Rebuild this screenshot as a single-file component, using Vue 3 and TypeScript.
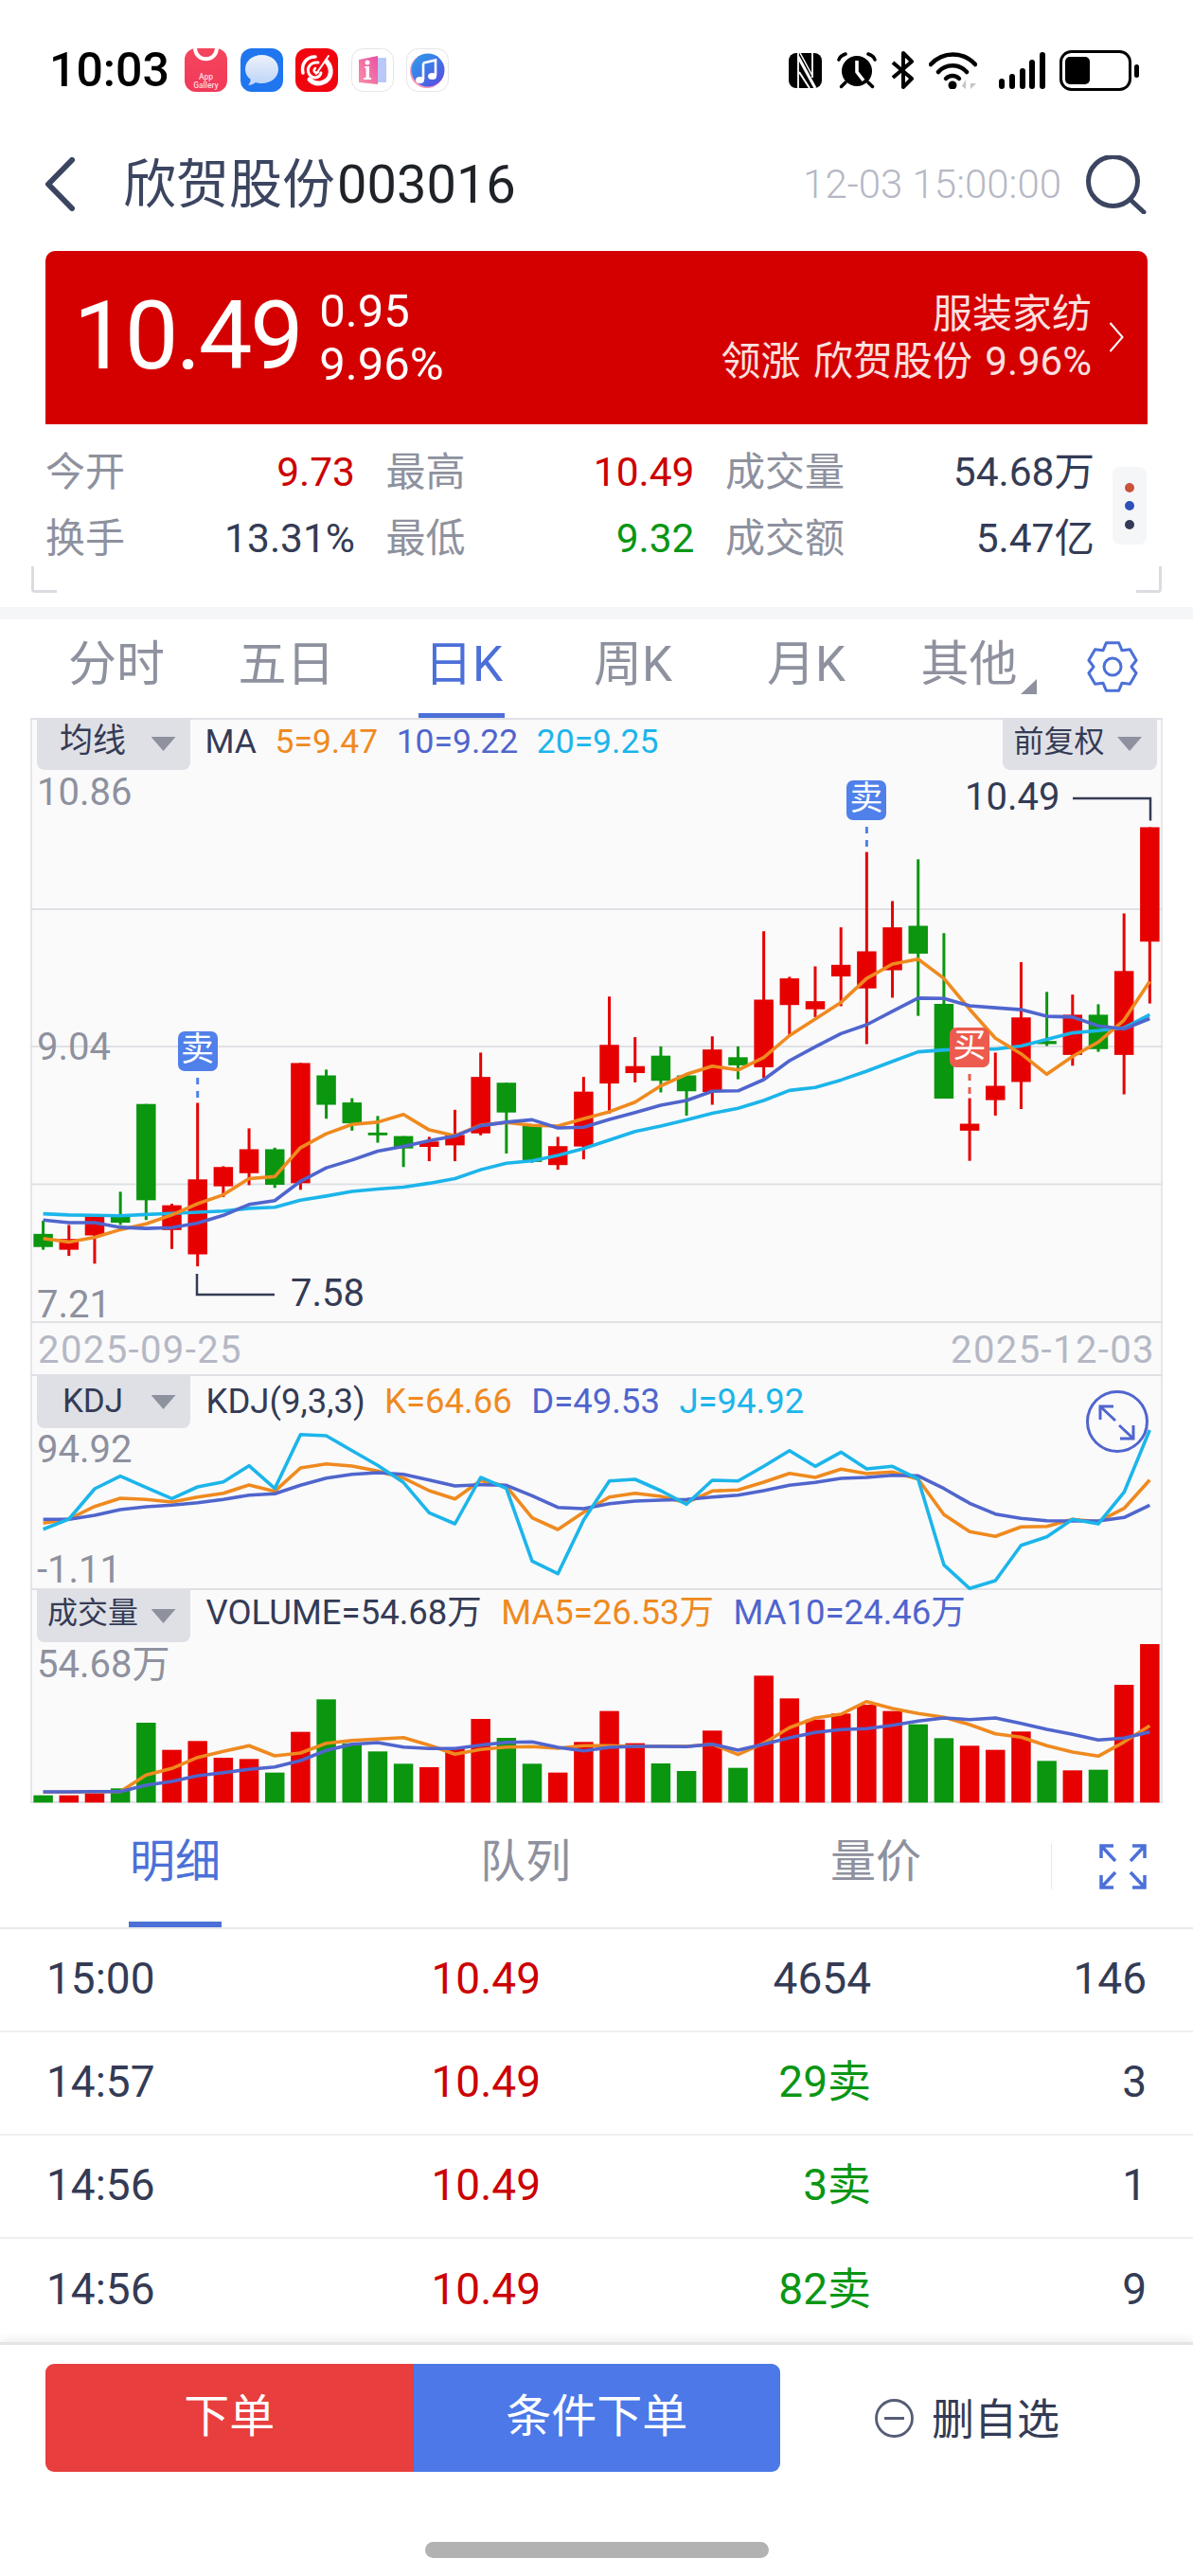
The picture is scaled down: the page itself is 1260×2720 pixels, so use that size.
<script setup lang="ts">
// Daily K-line quote page for a single stock.
type Candle = { c: 'r' | 'g'; hi: number; lo: number; top: number; bot: number }

const STEP = 27.18
const X0 = 13.6
const BODY = 20.5
const xAt = (i: number) => X0 + STEP * i

// Raw series are kept in plot units; each pane maps them to its own pixels.
const priceY = (v: number) => 22 + v / 2.45
const kdjY = (v: number) => v / 3 - 33
const volY = (v: number) => v / 3 - 259

const rawCandles: [string, number, number, number, number][] = [
  ['g', 1247, 1322, 1281, 1315], ['r', 1258, 1338, 1294, 1322], ['r', 1232, 1358, 1232, 1285],
  ['g', 1172, 1258, 1232, 1252], ['g', 945, 1245, 945, 1194], ['r', 1203, 1320, 1207, 1271],
  ['r', 942, 1365, 1140, 1334], ['r', 1106, 1186, 1108, 1158], ['r', 1008, 1155, 1062, 1124],
  ['g', 1058, 1162, 1062, 1154], ['r', 839, 1167, 839, 1150], ['g', 856, 983, 871, 947],
  ['g', 930, 1014, 941, 995], ['g', 976, 1045, 1019, 1026], ['g', 1028, 1108, 1028, 1060],
  ['r', 1030, 1093, 1042, 1056], ['r', 960, 1093, 1025, 1052], ['r', 812, 1026, 875, 1021],
  ['g', 890, 1073, 890, 967], ['g', 1000, 1097, 1000, 1095], ['r', 1030, 1115, 1054, 1103],
  ['r', 875, 1088, 913, 1055], ['r', 667, 970, 792, 892], ['r', 772, 889, 847, 865],
  ['g', 796, 915, 820, 885], ['g', 871, 975, 871, 912], ['r', 770, 947, 804, 914],
  ['g', 796, 881, 824, 845], ['r', 498, 878, 675, 850], ['r', 616, 770, 620, 689],
  ['r', 589, 720, 679, 700], ['r', 488, 692, 585, 615], ['r', 293, 790, 550, 646],
  ['r', 420, 670, 488, 599], ['g', 312, 717, 484, 556], ['g', 503, 931, 686, 931],
  ['r', 930, 1092, 996, 1014], ['r', 812, 975, 898, 935], ['r', 578, 958, 721, 888],
  ['g', 655, 795, 782, 790], ['r', 662, 846, 714, 818], ['g', 687, 810, 714, 803],
  ['r', 452, 920, 601, 818], ['r', 229, 685, 229, 525]
]
const candles: Candle[] = rawCandles.map(([c, hi, lo, top, bot]) => ({
  c: c as 'r' | 'g',
  hi: priceY(hi),
  lo: priceY(lo),
  top: priceY(top),
  bot: priceY(bot)
}))

const ma5 = [1293, 1302, 1290, 1270, 1255, 1232, 1203, 1180, 1138, 1133, 1058, 1022, 998, 992, 972, 1012, 1027, 1000, 993, 1000, 1002, 983, 965, 940, 898, 868, 847, 857, 825, 768, 725, 682, 620, 583, 570, 620, 700, 775, 815, 868, 822, 785, 728, 628]
const ma10 = [1245, 1252, 1252, 1264, 1267, 1265, 1253, 1233, 1205, 1195, 1145, 1110, 1090, 1067, 1055, 1040, 1028, 1001, 992, 986, 1007, 1005, 985, 967, 948, 936, 912, 911, 882, 833, 797, 763, 740, 705, 671, 672, 691, 696, 701, 718, 720, 743, 751, 724]
const ma20 = [1229, 1232, 1233, 1234, 1231, 1228, 1225, 1222, 1215, 1212, 1194, 1183, 1171, 1165, 1160, 1150, 1138, 1115, 1098, 1092, 1078, 1060, 1038, 1016, 1002, 986, 969, 956, 936, 910, 902, 883, 860, 835, 810, 805, 803, 803, 795, 778, 761, 755, 748, 714]

const kLine = [565, 552, 512, 486, 490, 498, 482, 470, 444, 464, 390, 377, 384, 400, 422, 462, 488, 430, 448, 548, 585, 530, 482, 470, 480, 500, 463, 460, 435, 407, 420, 394, 408, 403, 425, 538, 592, 607, 577, 575, 553, 560, 518, 428]
const dLine = [553, 553, 540, 522, 513, 508, 500, 490, 476, 472, 445, 422, 410, 405, 410, 428, 447, 443, 445, 478, 515, 519, 503, 495, 492, 490, 482, 476, 462, 445, 436, 423, 420, 413, 415, 455, 502, 536, 550, 557, 558, 558, 547, 508]
const jLine = [584, 552, 456, 416, 452, 487, 450, 434, 383, 455, 284, 288, 335, 382, 436, 532, 567, 420, 455, 685, 725, 555, 431, 426, 462, 505, 429, 431, 385, 335, 385, 340, 393, 385, 425, 697, 772, 747, 635, 608, 553, 567, 467, 270]

const rawBars: [string, number][] = [
  ['g', 1427], ['r', 1427], ['r', 1421], ['g', 1405], ['g', 1197], ['r', 1283], ['r', 1255], ['r', 1308], ['r', 1312], ['g', 1355], ['r', 1226],
  ['g', 1123], ['g', 1262], ['g', 1288], ['g', 1327], ['r', 1338], ['r', 1278], ['r', 1185], ['g', 1245], ['g', 1327], ['r', 1355], ['r', 1258],
  ['r', 1160], ['r', 1262], ['g', 1326], ['g', 1350], ['r', 1222], ['g', 1340], ['r', 1048], ['r', 1120], ['r', 1187], ['r', 1168], ['r', 1140],
  ['r', 1160], ['g', 1202], ['g', 1246], ['r', 1270], ['r', 1283], ['r', 1225], ['g', 1318], ['r', 1348], ['g', 1346], ['r', 1077], ['r', 948]
]
const bars = rawBars.map(([c, v]) => ({ c, y: volY(v) }))
const volBase = volY(1450)
const volMa5 = [1417, 1417, 1415, 1415, 1363, 1342, 1307, 1288, 1270, 1302, 1293, 1262, 1253, 1249, 1244, 1268, 1297, 1282, 1274, 1273, 1278, 1270, 1270, 1272, 1272, 1272, 1265, 1298, 1262, 1213, 1182, 1170, 1130, 1152, 1168, 1180, 1203, 1232, 1243, 1270, 1290, 1303, 1258, 1207]
const volMa10 = [1416, 1416, 1415, 1415, 1395, 1383, 1365, 1355, 1345, 1337, 1317, 1285, 1265, 1260, 1274, 1279, 1279, 1268, 1259, 1258, 1275, 1286, 1275, 1272, 1272, 1273, 1265, 1284, 1265, 1245, 1228, 1219, 1216, 1205, 1192, 1182, 1187, 1182, 1199, 1218, 1234, 1252, 1246, 1226]

const toPoints = (vals: number[], map: (v: number) => number) =>
  vals.map((v, i) => `${xAt(i).toFixed(1)},${map(v).toFixed(1)}`).join(' ')

const priceLines = [
  { cls: 'ln-cyan', pts: toPoints(ma20, priceY) },
  { cls: 'ln-orange', pts: toPoints(ma5, priceY) },
  { cls: 'ln-blue', pts: toPoints(ma10, priceY) }
]
const kdjLines = [
  { cls: 'ln-orange', pts: toPoints(kLine, kdjY) },
  { cls: 'ln-blue', pts: toPoints(dLine, kdjY) },
  { cls: 'ln-cyan', pts: toPoints(jLine, kdjY) }
]
const volLines = [
  { cls: 'ln-orange', pts: toPoints(volMa5, volY) },
  { cls: 'ln-blue', pts: toPoints(volMa10, volY) }
]

// Settings gear: six teeth around a ring, built in polar form.
const gearPath = (() => {
  const pts: string[] = []
  for (let t = 0; t < 6; t++) {
    const a = -Math.PI / 2 + (t * Math.PI) / 3
    const offs: [number, number][] = [[-0.52, 20], [-0.26, 26], [0.26, 26], [0.52, 20]]
    for (const [d, r] of offs) {
      pts.push(`${(27 + r * Math.cos(a + d)).toFixed(2)} ${(27 + r * Math.sin(a + d)).toFixed(2)}`)
    }
  }
  return 'M' + pts.join('L') + 'Z'
})()

const periods = ['分时', '五日', '日K', '周K', '月K', '其他']
const stats = [
  { label: '今开', value: '9.73', tone: 'up' },
  { label: '最高', value: '10.49', tone: 'up' },
  { label: '成交量', value: '54.68万', tone: '' },
  { label: '换手', value: '13.31%', tone: '' },
  { label: '最低', value: '9.32', tone: 'down' },
  { label: '成交额', value: '5.47亿', tone: '' }
]
const trades = [
  { time: '15:00', price: '10.49', vol: '4654', tone: '', count: '146' },
  { time: '14:57', price: '10.49', vol: '29卖', tone: 'down', count: '3' },
  { time: '14:56', price: '10.49', vol: '3卖', tone: 'down', count: '1' },
  { time: '14:56', price: '10.49', vol: '82卖', tone: 'down', count: '9' }
]
</script>

<template>
  <div class="page">
    <header class="status">
      <span class="clock">10:03</span>
      <div class="apps">
        <svg class="app" viewBox="0 0 45 46">
          <defs>
            <linearGradient id="galleryFill" x1="0" y1="0" x2="0" y2="1">
              <stop offset="0" stop-color="#f4465c" />
              <stop offset="1" stop-color="#f2385a" />
            </linearGradient>
          </defs>
          <rect width="45" height="46" rx="12" fill="url(#galleryFill)" />
          <path d="M11 0C12 15 33 15 34 0" fill="none" stroke="#fff" stroke-width="4" />
          <text x="22.5" y="33" class="gallery-text">App</text>
          <text x="22.5" y="42" class="gallery-text">Gallery</text>
        </svg>
        <svg class="app" viewBox="0 0 45 46">
          <defs>
            <linearGradient id="bubbleFill" x1="0" y1="0" x2="0" y2="1">
              <stop offset="0" stop-color="#eef2fb" />
              <stop offset="1" stop-color="#bcd3f8" />
            </linearGradient>
          </defs>
          <rect width="45" height="46" rx="12" fill="#1f76ef" />
          <path d="M22.5 7C32.5 7 40 13.500 40 22S32.500 37 22.500 37C20 37 18 36.600 16 36C13.500 38.500 10 39 8 38.800C10 37 10.800 34.700 10.500 32.800C6.800 30 5 26.500 5 22C5 13.500 12.500 7 22.500 7Z" fill="url(#bubbleFill)" />
        </svg>
        <svg class="app" viewBox="0 0 45 46">
          <rect width="45" height="46" rx="12" fill="#f2040f" />
          <g fill="none" stroke="#fff" stroke-linecap="round">
            <path d="M21 9C11 9 6 17 8 26" stroke-width="3.500" />
            <path d="M24 15C15 14 11 22 15 28C19 33 26 31 27 26" stroke-width="3" />
            <path d="M21 21C18 24 21 27 24 25" stroke-width="2.500" />
            <path d="M33 14C40 22 38 33 29 36C24 38 19 37 15 33" stroke-width="5" />
            <path d="M35 8L22 27" stroke-width="2" />
          </g>
        </svg>
        <svg class="app" viewBox="0 0 45 46">
          <defs>
            <linearGradient id="bookFill" x1="0" y1="1" x2="1" y2="0">
              <stop offset="0" stop-color="#fb8fa6" />
              <stop offset="1" stop-color="#e851a5" />
            </linearGradient>
          </defs>
          <rect x=".5" y=".5" width="44" height="45" rx="12" fill="#fff" stroke="#e5e5ea" />
          <path d="M25 10H37V36H25Z" fill="#b9c8f8" />
          <path d="M8 12L28 8V38L8 36Z" fill="url(#bookFill)" />
          <path d="M14 19H19V31H21V33H13V31H15.500V21H14Z" fill="#fff" />
          <circle cx="17" cy="15" r="2.500" fill="#fff" />
        </svg>
        <svg class="app" viewBox="0 0 45 46">
          <defs>
            <linearGradient id="discFill" x1="0" y1="0" x2="1" y2="1">
              <stop offset="0" stop-color="#2aa2ec" />
              <stop offset="1" stop-color="#5a48e0" />
            </linearGradient>
          </defs>
          <rect x=".5" y=".5" width="44" height="45" rx="12" fill="#fff" stroke="#e5e5ea" />
          <circle cx="22" cy="24" r="18" fill="#f2679b" opacity=".7" />
          <circle cx="23" cy="23" r="17.500" fill="url(#discFill)" />
          <path d="M18 15.500L31 12.500V29" fill="none" stroke="#fff" stroke-width="2.600" />
          <path d="M18 15.500V33" fill="none" stroke="#fff" stroke-width="2.600" />
          <ellipse cx="14.500" cy="33.500" rx="4.500" ry="3.500" fill="#fff" />
          <ellipse cx="27.500" cy="29.500" rx="4.500" ry="3.500" fill="#fff" />
        </svg>
      </div>
      <div class="sys">
        <svg class="nfc" viewBox="0 0 35 37">
          <rect width="35" height="37" rx="8" fill="#000" />
          <g fill="none" stroke="#fff">
            <path d="M10 0V37" stroke-width="1.800" />
            <path d="M10 4L28 37" stroke-width="3" />
            <path d="M11 20L22 37" stroke-width="2" />
            <path d="M25 0V26" stroke-width="1.800" />
            <path d="M12 0L25 24" stroke-width="1.500" />
          </g>
        </svg>
        <svg class="alarm" viewBox="0 0 42 39">
          <circle cx="21" cy="20" r="16" fill="#000" />
          <path d="M21 9V21L28 30" fill="none" stroke="#fff" stroke-width="3.600" />
          <g fill="none" stroke="#000" stroke-width="3.500" stroke-linecap="round">
            <path d="M2 8C3 5 6 3 9 2" />
            <path d="M40 8C39 5 36 3 33 2" />
            <path d="M4.500 36.500L9 32" />
            <path d="M37.500 36.500L33 32" />
          </g>
        </svg>
        <svg class="bt" viewBox="0 0 28 40">
          <path d="M3 12L23 29L14 38V2L23 11L3 28" fill="none" stroke="#000" stroke-width="4" stroke-linejoin="round" />
        </svg>
        <svg class="wifi" viewBox="0 0 51 40">
          <g fill="none" stroke="#000" stroke-width="4.500" stroke-linecap="round">
            <path d="M2 14C15 0 36 0 49 14" />
            <path d="M10 22C18 13 32 13 40 22" />
            <path d="M18 29C22 25 28 25 32 29" />
          </g>
          <circle cx="25" cy="36" r="4.500" fill="#000" />
          <path d="M39 30V40L35 37ZM44 30V40L50 34H44Z" fill="#c4c4c4" />
        </svg>
        <svg class="signal" viewBox="0 0 49 39">
          <rect x="0" y="28" width="6" height="11" rx="3" />
          <rect x="11" y="23" width="6" height="16" rx="3" />
          <rect x="22" y="17" width="6" height="22" rx="3" />
          <rect x="32" y="8" width="6" height="31" rx="3" />
          <rect x="43" y="0" width="6" height="39" rx="3" />
        </svg>
        <svg class="battery" viewBox="0 0 84 43">
          <rect x="1.500" y="1.500" width="73" height="40" rx="11" fill="none" stroke="#000" stroke-width="3" />
          <rect x="6" y="7" width="26" height="29" rx="5" fill="#000" />
          <rect x="79" y="15" width="5" height="14" rx="2.500" fill="#000" />
        </svg>
      </div>
    </header>

    <nav class="title-bar">
      <svg class="back" viewBox="0 0 33 57">
        <path d="M29 3L4 28.500L29 54" fill="none" stroke="#3c4560" stroke-width="6" stroke-linecap="round" stroke-linejoin="round" />
      </svg>
      <h1 class="name">欣贺股份<span class="code">003016</span></h1>
      <span class="stamp">12-03 15:00:00</span>
      <svg class="search" viewBox="0 0 64 62">
        <circle cx="28.500" cy="27.500" r="26" fill="none" stroke="#3c4560" stroke-width="5" />
        <path d="M47 47L61 60" stroke="#3c4560" stroke-width="5" stroke-linecap="round" />
      </svg>
    </nav>

    <section class="quote">
      <span class="last">10.49</span>
      <div class="change">
        <span>0.95</span>
        <span>9.96%</span>
      </div>
      <div class="sector">
        <span>服装家纺</span>
        <span class="sector-lead">领涨 欣贺股份 9.96%</span>
      </div>
      <svg class="chev" viewBox="0 0 16 32">
        <path d="M1.500 1L14.500 16L1.500 31" fill="none" stroke="#fff" stroke-width="2" />
      </svg>
    </section>

    <section class="stats">
      <div v-for="s in stats" :key="s.label" class="stat">
        <span class="stat-label">{{ s.label }}</span>
        <span class="stat-value" :class="s.tone">{{ s.value }}</span>
      </div>
      <div class="chip">
        <i class="dot dot-r"></i>
        <i class="dot dot-b"></i>
        <i class="dot dot-k"></i>
      </div>
      <i class="bracket bracket-l"></i>
      <i class="bracket bracket-r"></i>
    </section>

    <div class="band"></div>

    <div class="periods">
      <span v-for="(p, i) in periods" :key="p" class="period" :class="{ on: i === 2, more: i === 5 }">{{ p }}</span>
      <svg class="gear" viewBox="0 0 54 54">
        <path :d="gearPath" fill="none" stroke="#4c70d8" stroke-width="3" stroke-linejoin="round" />
        <circle cx="27" cy="27" r="9" fill="none" stroke="#4c70d8" stroke-width="3" />
      </svg>
    </div>

    <section class="chart">
      <div class="pane pane-price">
        <div class="legend">
          <div class="pill"><span class="pill-text">均线</span><i class="caret"></i></div>
          <span class="ink">MA</span>
          <span class="c-orange">5=9.47</span>
          <span class="c-blue">10=9.22</span>
          <span class="c-cyan">20=9.25</span>
          <div class="pill pill-end"><span class="pill-text small">前复权</span><i class="caret"></i></div>
        </div>
        <svg class="plot" width="1196" height="692">
          <line v-for="y in [202, 347, 492.5, 638]" :key="y" x1="0" x2="1196" :y1="y" :y2="y" class="grid" />
          <g v-for="(k, i) in candles" :key="i" :class="k.c === 'r' ? 'rise' : 'fall'">
            <rect :x="xAt(i) - 1.5" :y="k.hi" width="3" :height="k.lo - k.hi" />
            <rect :x="xAt(i) - BODY / 2" :y="k.top" :width="BODY" :height="k.bot - k.top || 1" />
          </g>
          <polyline v-for="l in priceLines" :key="l.cls" :points="l.pts" class="ln" :class="l.cls" />
          <path d="M176 587V609H258" class="lead" />
          <path d="M1101 85H1183V108.500" class="lead" />
          <path d="M176.700 380V406" class="dash dash-b" />
          <path d="M883.400 115V141" class="dash dash-b" />
          <path d="M992 376V402" class="dash dash-r" />
        </svg>
        <span class="axis ax-hi">10.86</span>
        <span class="axis ax-mid">9.04</span>
        <span class="axis ax-lo">7.21</span>
        <span class="note note-hi">10.49</span>
        <span class="note note-lo">7.58</span>
        <span class="sig sig-a">卖</span>
        <span class="sig sig-b">卖</span>
        <span class="sig sig-c">买</span>
        <div class="dates"><span>2025-09-25</span><span>2025-12-03</span></div>
      </div>

      <div class="pane pane-kdj">
        <div class="legend">
          <div class="pill"><span class="pill-text">KDJ</span><i class="caret"></i></div>
          <span class="ink">KDJ(9,3,3)</span>
          <span class="c-orange">K=64.66</span>
          <span class="c-blue">D=49.53</span>
          <span class="c-cyan">J=94.92</span>
        </div>
        <svg class="plot" width="1196" height="226">
          <polyline v-for="l in kdjLines" :key="l.cls" :points="l.pts" class="ln" :class="l.cls" />
          <circle cx="1148" cy="48" r="31.500" class="ring" />
          <path d="M1130 46V32H1144M1130 32L1146 47M1165 52V66H1151M1165 66L1150 52" class="ring" />
        </svg>
        <span class="axis ax-kdj-hi">94.92</span>
        <span class="axis ax-kdj-lo">-1.11</span>
      </div>

      <div class="pane pane-vol">
        <div class="legend">
          <div class="pill"><span class="pill-text small">成交量</span><i class="caret"></i></div>
          <span class="ink">VOLUME=54.68万</span>
          <span class="c-orange">MA5=26.53万</span>
          <span class="c-blue">MA10=24.46万</span>
        </div>
        <svg class="plot" width="1196" height="225">
          <rect
            v-for="(b, i) in bars"
            :key="i"
            :x="xAt(i) - BODY / 2"
            :y="b.y"
            :width="BODY"
            :height="volBase - b.y"
            :class="b.c === 'r' ? 'rise' : 'fall'"
          />
          <polyline v-for="l in volLines" :key="l.cls" :points="l.pts" class="ln" :class="l.cls" />
        </svg>
        <span class="axis ax-vol">54.68万</span>
      </div>
    </section>

    <div class="deal-tabs">
      <span class="deal-tab on">明细</span>
      <span class="deal-tab">队列</span>
      <span class="deal-tab">量价</span>
      <div class="expand">
        <svg viewBox="0 0 50 48" width="50" height="48">
          <path d="M2 15V2H15M2 2L17 18M48 15V2H35M48 2L33 18M2 33V46H15M2 46L17 30M48 33V46H35M48 46L33 30" fill="none" stroke="#4c70d8" stroke-width="3.500" />
        </svg>
      </div>
    </div>

    <div class="deals">
      <div v-for="(t, i) in trades" :key="i" class="deal">
        <span>{{ t.time }}</span>
        <span class="num up">{{ t.price }}</span>
        <span class="num" :class="t.tone">{{ t.vol }}</span>
        <span class="num">{{ t.count }}</span>
      </div>
    </div>

    <footer class="dock">
      <div class="actions">
        <div class="btns">
          <span class="btn btn-order">下单</span>
          <span class="btn btn-cond">条件下单</span>
        </div>
        <div class="unwatch">
          <svg viewBox="0 0 41 41" width="41" height="41">
            <circle cx="20.500" cy="20.500" r="19" fill="none" stroke="#565d75" stroke-width="2.800" />
            <path d="M10 20.500H31" stroke="#565d75" stroke-width="3" />
          </svg>
          <span class="unwatch-text">删自选</span>
        </div>
      </div>
      <i class="home"></i>
    </footer>
  </div>
</template>

<style>
body {
  margin: 0;
  background: #fff;
}
</style>

<style scoped>
.page {
  width: 1260px;
  height: 2720px;
  overflow: hidden;
  background: #fff;
  color: #343b55;
  font-family: Roboto, "Noto Sans CJK SC", sans-serif;
}

/* status bar */
.status {
  display: flex;
  align-items: center;
  box-sizing: border-box;
  height: 120px;
  padding: 51px 57px 23px 52px;
}
.clock {
  width: 127px;
  font-size: 50px;
  font-weight: 500;
  line-height: 46px;
  color: #000;
}
.apps {
  display: flex;
  gap: 13.500px;
  margin-left: 16px;
}
.app {
  width: 45px;
  height: 46px;
}
.gallery-text {
  font-size: 8.500px;
  font-weight: 500;
  text-anchor: middle;
  fill: #ffd9df;
}
.sys {
  display: flex;
  align-items: center;
  margin-left: auto;
}
.nfc { width: 35px; height: 37px; }
.alarm { width: 42px; height: 39px; margin-left: 16px; }
.bt { width: 28px; height: 40px; margin-left: 14px; }
.wifi { width: 51px; height: 40px; margin-left: 13px; }
.signal { width: 49px; height: 39px; margin-left: 23px; }
.battery { width: 84px; height: 43px; margin-left: 15px; }

/* title row */
.title-bar {
  display: flex;
  align-items: center;
  box-sizing: border-box;
  height: 145px;
  padding: 4px 49px 0 47px;
}
.back {
  width: 33px;
  height: 57px;
}
.name {
  margin: 0 0 0 50px;
  font-size: 56px;
  font-weight: 400;
  line-height: 70px;
  color: #3c4560;
}
.code {
  margin-left: 2px;
  font-size: 56px;
  color: #1f2226;
}
.stamp {
  margin-left: auto;
  font-size: 42px;
  font-weight: 300;
  color: #b5b8c4;
}
.search {
  width: 64px;
  height: 62px;
  margin-left: 26px;
}

/* price banner */
.quote {
  display: flex;
  align-items: flex-start;
  box-sizing: border-box;
  height: 183px;
  margin: 0 48px;
  padding-left: 29.500px;
  background: #d40000;
  border-radius: 10px 10px 0 0;
  color: #fff;
}
.last {
  margin-top: 30px;
  font-size: 101px;
  line-height: 120px;
  letter-spacing: -2.600px;
}
.change {
  display: flex;
  flex-direction: column;
  margin: 36px 0 0 19px;
  font-size: 49px;
  line-height: 56px;
}
.sector {
  display: flex;
  flex-direction: column;
  align-items: flex-end;
  margin: 42px 0 0 auto;
  font-size: 42px;
  line-height: 50px;
  color: #fbe0e0;
}
.sector-lead {
  word-spacing: 3px;
}
.chev {
  width: 16px;
  height: 32px;
  margin: 75px 25px 0 18px;
}

/* day statistics */
.stats {
  position: relative;
  display: grid;
  grid-template-columns: 327px 326px 390px;
  grid-auto-rows: 70px;
  column-gap: 32.500px;
  box-sizing: border-box;
  height: 193px;
  padding: 16px 0 0 48px;
}
.stat {
  display: flex;
  align-items: center;
  justify-content: space-between;
  font-size: 42px;
  line-height: 56px;
}
.stat-label {
  color: #8e919e;
}
.stat-value {
  font-size: 42.500px;
  color: #343b55;
}
.up { color: #cc0000; }
.down { color: #0a9614; }
.chip {
  position: absolute;
  left: 1175px;
  top: 45px;
  display: flex;
  flex-direction: column;
  align-items: center;
  justify-content: center;
  gap: 9.500px;
  width: 36px;
  height: 82px;
  background: #f5f6f8;
  border-radius: 8px;
}
.dot {
  width: 10px;
  height: 10px;
  border-radius: 50%;
}
.dot-r { background: #c9533c; }
.dot-b { background: #3050b8; }
.dot-k { background: #343b55; }
.bracket {
  position: absolute;
  top: 150px;
  width: 27px;
  height: 28px;
  box-sizing: border-box;
  border-bottom: 3px solid #dadce2;
}
.bracket-l {
  left: 33px;
  border-left: 3px solid #dadce2;
  border-bottom-left-radius: 4px;
}
.bracket-r {
  left: 1200px;
  border-right: 3px solid #dadce2;
  border-bottom-right-radius: 4px;
}
.band {
  height: 13px;
  background: #f5f6f8;
}

/* period switcher */
.periods {
  display: grid;
  grid-template-columns: 180px 179px 195px 163px 203px 141px 1fr;
  align-items: center;
  box-sizing: border-box;
  height: 104px;
  padding-left: 33px;
}
.period {
  position: relative;
  height: 104px;
  line-height: 96px;
  font-size: 51px;
  text-align: center;
  color: #8e919e;
}
.period.on {
  color: #4c70d8;
}
.period.on::after {
  content: "";
  position: absolute;
  left: 50px;
  top: 98.500px;
  width: 91px;
  height: 5.500px;
  background: #4c70d8;
}
.period.more::after {
  content: "";
  position: absolute;
  right: -1px;
  top: 63px;
  width: 17px;
  height: 16px;
  background: #8e919e;
  clip-path: polygon(100% 0, 100% 100%, 0 100%);
}
.gear {
  width: 54px;
  height: 54px;
  margin: -4px 0 0 54px;
}

/* chart panes */
.chart {
  width: 1196px;
  margin-left: 32px;
  background: #fafafb;
  box-shadow: inset 0 2px 0 #e0e1e5, inset 2px 0 0 #e6e7eb, inset -2px 0 0 #e6e7eb;
}
.pane {
  position: relative;
  box-sizing: border-box;
  border-bottom: 2px solid #e0e1e5;
}
.pane-price { height: 695px; }
.pane-kdj { height: 226px; }
.pane-vol { height: 225px; }
.plot {
  position: absolute;
  left: 0;
  top: 0;
  display: block;
}
.legend {
  position: relative;
  z-index: 1;
  display: flex;
  align-items: flex-start;
  gap: 20.500px;
  height: 55px;
  padding: 0 6.500px;
  font-size: 36.500px;
  line-height: 50px;
  white-space: nowrap;
}
.pane-price .legend {
  gap: 19.500px;
  font-size: 35.500px;
}
.pane-kdj .legend { line-height: 54px; }
.pane-vol .legend { line-height: 48px; }
.ink { color: #343b55; }
.c-orange { color: #ef8a1f; }
.c-blue { color: #5065cd; }
.c-cyan { color: #1cb5ea; }
.pill {
  display: flex;
  align-items: flex-start;
  width: 162.500px;
  height: 55px;
  margin-right: -4px;
  background: #dfe0e5;
  border-radius: 0 0 8px 8px;
}
.pill-end {
  margin-left: auto;
  margin-right: 0;
}
.pill-text {
  width: 119px;
  text-align: center;
  font-size: 35px;
  color: #343b55;
}
.pill-text.small {
  font-size: 32px;
}
.caret {
  align-self: center;
  width: 26px;
  height: 15px;
  margin-left: 2px;
  background: #8e919e;
  clip-path: polygon(0 0, 100% 0, 50% 100%);
}
.grid {
  stroke: #e0e1e5;
  stroke-width: 2;
}
.rise { fill: #e60000; }
.fall { fill: #0a960f; }
.ln {
  fill: none;
  stroke-width: 3.600;
  stroke-linejoin: round;
}
.ln-orange { stroke: #ef8a1f; }
.ln-blue { stroke: #5065cd; }
.ln-cyan { stroke: #1cb5ea; }
.lead {
  fill: none;
  stroke: #343b55;
  stroke-width: 2.500;
}
.dash {
  fill: none;
  stroke-width: 3;
  stroke-dasharray: 7 7;
}
.dash-b { stroke: #5080ea; }
.dash-r { stroke: #ec5b4e; }
.ring {
  fill: none;
  stroke: #5065cd;
  stroke-width: 3;
}
.axis {
  position: absolute;
  left: 7px;
  font-size: 40px;
  line-height: 40px;
  color: #8e919e;
}
.ax-hi { top: 59px; }
.ax-mid { top: 328px; }
.ax-lo { top: 600px; }
.ax-kdj-hi { top: 58px; }
.ax-kdj-lo { top: 185px; }
.ax-vol { top: 59px; }
.note {
  position: absolute;
  font-size: 40px;
  line-height: 40px;
  color: #343b55;
}
.note-hi { left: 987px; top: 64px; }
.note-lo { left: 275px; top: 588px; }
.sig {
  position: absolute;
  width: 42px;
  height: 42px;
  border-radius: 7px;
  font-size: 35px;
  line-height: 40px;
  text-align: center;
  color: #fff;
  background: #5080ea;
}
.sig-a { left: 155.500px; top: 331px; }
.sig-b { left: 862px; top: 66px; }
.sig-c { left: 971px; top: 326.500px; background: #ec5b4e; }
.dates {
  position: absolute;
  left: 8px;
  right: 8px;
  top: 648px;
  display: flex;
  justify-content: space-between;
  font-size: 40px;
  line-height: 40px;
  letter-spacing: 1.400px;
  color: #b5b8c4;
}

/* trade detail tabs */
.deal-tabs {
  display: grid;
  grid-template-columns: 370px 370px 370px 1fr;
  align-items: stretch;
  box-sizing: border-box;
  height: 133px;
  border-bottom: 2px solid #e8e9ec;
}
.deal-tab {
  position: relative;
  line-height: 124px;
  font-size: 48px;
  text-align: center;
  color: #8e919e;
}
.deal-tab.on { color: #4c70d8; }
.deal-tab.on::after {
  content: "";
  position: absolute;
  left: 136px;
  bottom: 0;
  width: 98px;
  height: 6px;
  background: #4c70d8;
}
.expand {
  display: flex;
  justify-content: flex-end;
  box-sizing: border-box;
  height: 48px;
  margin-top: 43px;
  padding-right: 49px;
  border-left: 1px solid #e6e7ea;
}
.deals {
  height: 436px;
}
.deal {
  display: grid;
  grid-template-columns: 200px 322px 349px 291px;
  align-items: center;
  box-sizing: border-box;
  height: 109px;
  padding: 0 0 3px 49px;
  border-bottom: 2px solid #eeeff1;
  font-size: 46px;
  line-height: 60px;
}
.deal:last-child {
  border-bottom: 0;
}
.num {
  text-align: right;
}

/* bottom dock */
.dock {
  position: relative;
  box-sizing: border-box;
  height: 247px;
  padding-top: 20px;
  background: #fff;
  border-top: 3px solid #e3e4e6;
  box-shadow: 0 -5px 8px rgba(0, 0, 0, .05);
}
.actions {
  display: flex;
  align-items: center;
  padding-left: 48px;
}
.btns {
  display: grid;
  grid-template-columns: 388.500px 387.500px;
  height: 114px;
  border-radius: 9px;
  overflow: hidden;
}
.btn {
  line-height: 112px;
  font-size: 48px;
  text-align: center;
  color: #fff;
}
.btn-order { background: #e83e3e; }
.btn-cond { background: #4c78e8; }
.unwatch {
  display: flex;
  align-items: center;
  gap: 19px;
  margin-left: 100px;
  font-size: 45px;
  color: #343b55;
}
.unwatch-text {
  margin-top: -4px;
}
.home {
  display: block;
  width: 363px;
  height: 17px;
  margin: 74px auto 0;
  border-radius: 9px;
  background: #b2b2b2;
}
</style>
